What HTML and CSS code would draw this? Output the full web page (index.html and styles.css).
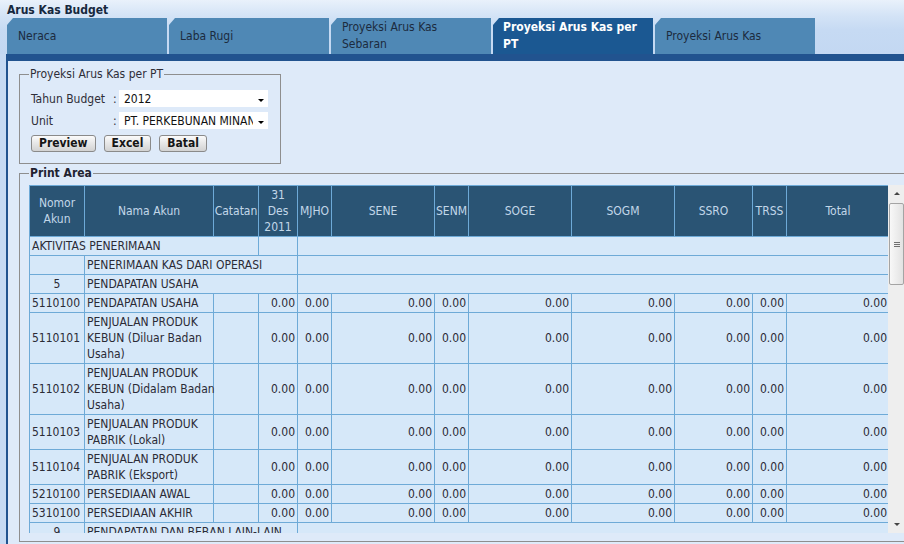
FILE: index.html
```html
<!DOCTYPE html>
<html>
<head>
<meta charset="utf-8">
<title>Arus Kas Budget</title>
<link rel="stylesheet" href="styles.css">
</head>
<body>
<div class="app">
  <div class="top">
    <div class="title">Arus Kas Budget</div>
    <div class="tabs">
      <div class="tab">Neraca</div>
      <div class="tab">Laba Rugi</div>
      <div class="tab">Proyeksi Arus Kas Sebaran</div>
      <div class="tab active">Proyeksi Arus Kas per PT</div>
      <div class="tab">Proyeksi Arus Kas</div>
    </div>
  </div>
  <div class="panel">
    <fieldset class="form-box">
      <legend>Proyeksi Arus Kas per PT</legend>
      <div class="form-rows">
        <div class="row">
          <span class="lbl">Tahun Budget</span><span class="colon">:</span>
          <div class="select"><span class="val">2012</span><span class="arrow"><span class="tri-down"></span></span></div>
        </div>
        <div class="row">
          <span class="lbl">Unit</span><span class="colon">:</span>
          <div class="select"><span class="val">PT. PERKEBUNAN MINANGA OGAN</span><span class="arrow"><span class="tri-down"></span></span></div>
        </div>
        <div class="buttons">
          <button class="btn">Preview</button>
          <button class="btn">Excel</button>
          <button class="btn">Batal</button>
        </div>
      </div>
    </fieldset>
    <fieldset class="print">
      <legend>Print Area</legend>
      <div class="scrollwrap">
        <div class="viewport">
          <table class="grid">
            <colgroup>
              <col class="c-no"><col class="c-name"><col class="c-cat"><col class="c-des"><col class="c-s">
              <col class="c-w"><col class="c-s"><col class="c-w"><col class="c-w"><col class="c-m"><col class="c-s"><col class="c-w">
            </colgroup>
            <thead>
              <tr>
                <th>Nomor<br>Akun</th>
                <th>Nama Akun</th>
                <th>Catatan</th>
                <th>31<br>Des<br>2011</th>
                <th>MJHO</th>
                <th>SENE</th>
                <th>SENM</th>
                <th>SOGE</th>
                <th>SOGM</th>
                <th>SSRO</th>
                <th>TRSS</th>
                <th>Total</th>
              </tr>
            </thead>
            <tbody>
              <tr>
                <td colspan="3">AKTIVITAS PENERIMAAN</td><td></td><td colspan="8"></td>
              </tr>
              <tr>
                <td></td><td colspan="3">PENERIMAAN KAS DARI OPERASI</td><td colspan="8"></td>
              </tr>
              <tr>
                <td class="ctr">5</td><td colspan="3">PENDAPATAN USAHA</td><td colspan="8"></td>
              </tr>
              <tr>
                <td>5110100</td><td class="nm">PENDAPATAN USAHA</td><td></td>
                <td class="n">0.00</td><td class="n">0.00</td><td class="n">0.00</td><td class="n">0.00</td><td class="n">0.00</td><td class="n">0.00</td><td class="n">0.00</td><td class="n">0.00</td><td class="n">0.00</td>
              </tr>
              <tr>
                <td>5110101</td><td class="nm">PENJUALAN PRODUK<br>KEBUN (Diluar Badan<br>Usaha)</td><td></td>
                <td class="n">0.00</td><td class="n">0.00</td><td class="n">0.00</td><td class="n">0.00</td><td class="n">0.00</td><td class="n">0.00</td><td class="n">0.00</td><td class="n">0.00</td><td class="n">0.00</td>
              </tr>
              <tr>
                <td>5110102</td><td class="nm">PENJUALAN PRODUK<br>KEBUN (Didalam Badan<br>Usaha)</td><td></td>
                <td class="n">0.00</td><td class="n">0.00</td><td class="n">0.00</td><td class="n">0.00</td><td class="n">0.00</td><td class="n">0.00</td><td class="n">0.00</td><td class="n">0.00</td><td class="n">0.00</td>
              </tr>
              <tr>
                <td>5110103</td><td class="nm">PENJUALAN PRODUK<br>PABRIK (Lokal)</td><td></td>
                <td class="n">0.00</td><td class="n">0.00</td><td class="n">0.00</td><td class="n">0.00</td><td class="n">0.00</td><td class="n">0.00</td><td class="n">0.00</td><td class="n">0.00</td><td class="n">0.00</td>
              </tr>
              <tr>
                <td>5110104</td><td class="nm">PENJUALAN PRODUK<br>PABRIK (Eksport)</td><td></td>
                <td class="n">0.00</td><td class="n">0.00</td><td class="n">0.00</td><td class="n">0.00</td><td class="n">0.00</td><td class="n">0.00</td><td class="n">0.00</td><td class="n">0.00</td><td class="n">0.00</td>
              </tr>
              <tr>
                <td>5210100</td><td class="nm">PERSEDIAAN AWAL</td><td></td>
                <td class="n">0.00</td><td class="n">0.00</td><td class="n">0.00</td><td class="n">0.00</td><td class="n">0.00</td><td class="n">0.00</td><td class="n">0.00</td><td class="n">0.00</td><td class="n">0.00</td>
              </tr>
              <tr>
                <td>5310100</td><td class="nm">PERSEDIAAN AKHIR</td><td></td>
                <td class="n">0.00</td><td class="n">0.00</td><td class="n">0.00</td><td class="n">0.00</td><td class="n">0.00</td><td class="n">0.00</td><td class="n">0.00</td><td class="n">0.00</td><td class="n">0.00</td>
              </tr>
              <tr>
                <td class="ctr">9</td><td colspan="3">PENDAPATAN DAN BEBAN LAIN-LAIN</td><td colspan="8"></td>
              </tr>
              <tr>
                <td>9110000</td><td colspan="3">PENDAPATAN LAIN-LAIN</td><td colspan="8"></td>
              </tr>
            </tbody>
          </table>
        </div>
        <div class="vscroll">
          <div class="sb-btn"><span class="tri-up"></span></div>
          <div class="thumb"><span class="grip"></span><span class="grip"></span><span class="grip"></span></div>
          <div class="track"></div>
          <div class="sb-btn"><span class="tri-down small"></span></div>
        </div>
      </div>
    </fieldset>
  </div>
</div>
</body>
</html>
```

FILE: styles.css
```css
html, body {
  margin: 0;
  padding: 0;
  overflow: hidden;
}

body {
  font-family: "DejaVu Sans Condensed", "DejaVu Sans", sans-serif;
  font-stretch: condensed;
  font-size: 12px;
  color: #2e2e38;
}

.app {
  width: 904px;
  height: 544px;
  background: #c6daf3;
  display: flex;
  flex-direction: column;
}

.top {
  background: linear-gradient(#e9f1fb 0, #d3e3f6 16px, #c6daf3 30px, #c3d8f2 54px);
}

.title {
  height: 18px;
  line-height: 21px;
  padding-left: 7px;
  font-weight: bold;
  color: #16283e;
}

.tabs {
  display: flex;
  gap: 2px;
  padding-left: 7px;
  height: 36px;
}

.tab {
  width: 160px;
  box-sizing: border-box;
  padding: 0 8px 0 11px;
  background: #4f88b5;
  color: #1c2b3e;
  display: flex;
  align-items: center;
  line-height: 17px;
  clip-path: polygon(6px 0, 100% 0, 100% 100%, 0 100%, 0 7px);
}

.tab.active {
  background: #1b5892;
  color: #ffffff;
  font-weight: bold;
  padding-left: 10px;
}

.panel {
  flex: 1;
  margin-left: 6px;
  border-left: 2px solid #21538f;
  border-top: 7px solid #21538f;
  background: #deeaf9;
  padding-left: 11px;
  overflow: hidden;
}

fieldset {
  border: 1px solid #8e8e8e;
  margin: 0;
  box-sizing: border-box;
}

legend {
  line-height: 14px;
  padding: 0 1px;
  color: #2e2e38;
}

.form-box {
  width: 262px;
  margin-top: 6px;
  padding: 9px 11px 11px;
}

.form-box legend {
  margin-left: -2px;
}

.form-rows {
  display: flex;
  flex-direction: column;
  gap: 5px;
}

.row {
  display: flex;
  align-items: center;
  height: 17px;
}

.lbl {
  width: 82px;
  flex: none;
}

.colon {
  width: 6px;
  flex: none;
}

.select {
  width: 149px;
  height: 17px;
  flex: none;
  background: #ffffff;
  display: flex;
  align-items: center;
}

.select .val {
  flex: 1;
  padding-left: 5px;
  white-space: nowrap;
  overflow: hidden;
  color: #111111;
}

.select .arrow {
  width: 15px;
  flex: none;
  display: flex;
  justify-content: center;
  padding-top: 4px;
}

.tri-down {
  width: 0;
  height: 0;
  border-left: 3px solid transparent;
  border-right: 3px solid transparent;
  border-top: 3px solid #000000;
}

.tri-down.small {
  border-top-color: #444444;
}

.tri-up {
  width: 0;
  height: 0;
  border-left: 3px solid transparent;
  border-right: 3px solid transparent;
  border-bottom: 3px solid #444444;
}

.buttons {
  display: flex;
  gap: 8px;
  margin-top: 1px;
}

.btn {
  font-family: inherit;
  font-stretch: condensed;
  font-size: 12px;
  font-weight: bold;
  height: 17px;
  line-height: 15px;
  padding: 0 7px;
  border: 1px solid #8a8a8a;
  border-radius: 3px;
  background: linear-gradient(#fbfbfb, #e6e6e6 50%, #d2d2d2);
  color: #151515;
}

.print {
  width: 900px;
  margin-top: 2px;
  padding: 5px 9px 8px;
}

.print legend {
  font-weight: bold;
  color: #222230;
}

.scrollwrap {
  display: flex;
  height: 348px;
}

.viewport {
  width: 859px;
  flex: none;
  overflow: hidden;
}

.grid {
  border-collapse: collapse;
  table-layout: fixed;
  width: 859px;
}

.c-no { width: 55px; }
.c-name { width: 129px; }
.c-cat { width: 45px; }
.c-des { width: 39px; }
.c-s { width: 34px; }
.c-w { width: 103px; }
.c-m { width: 78px; }

.grid th,
.grid td {
  border: 1px solid #6eaad7;
  line-height: 16px;
  padding: 1px 2px;
  vertical-align: middle;
  white-space: nowrap;
}

.grid th {
  background: #2a5474;
  color: #c2d7e9;
  font-weight: normal;
  text-align: center;
  padding: 1px 0;
}

.grid td {
  background: #d6e8f9;
  color: #2b2b36;
  text-align: left;
}

.grid td.n {
  text-align: right;
}

.grid td.ctr {
  text-align: center;
}

.vscroll {
  width: 17px;
  flex: none;
  background: #eeeeee;
  display: flex;
  flex-direction: column;
}

.sb-btn {
  height: 17px;
  display: flex;
  align-items: center;
  justify-content: center;
}

.thumb {
  height: 80px;
  margin: 1px 1px 0 1px;
  border: 1px solid #a4a4a4;
  border-radius: 2px;
  background: linear-gradient(to right, #f8f8f8, #e2e2e2);
  display: flex;
  flex-direction: column;
  align-items: center;
  justify-content: center;
  gap: 1px;
}

.grip {
  width: 6px;
  height: 1px;
  background: #707070;
}

.track {
  flex: 1;
}
```
